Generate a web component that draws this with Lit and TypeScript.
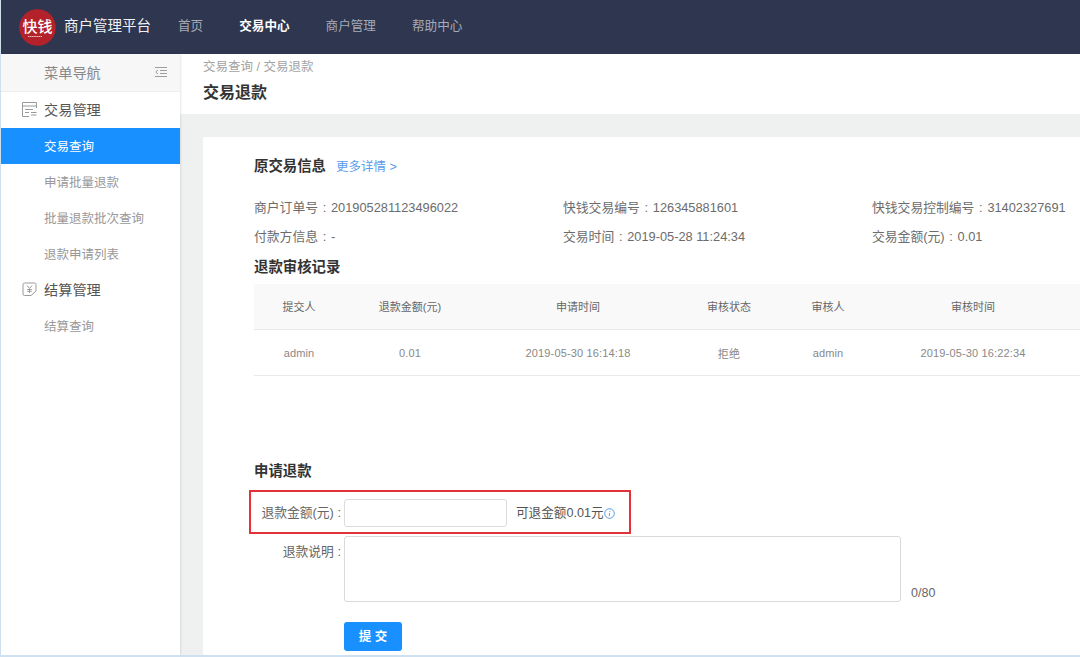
import { LitElement, html, css, svg } from "lit";
import { customElement } from "lit/decorators.js";

const colon = html`<span class="c">:</span>`;

const logo = html`<svg class="logo" viewBox="0 0 37 37" width="37" height="37">
  <circle cx="18.500" cy="18.500" r="18.300" fill="#b3222b"></circle>
  <text x="18.500" y="23" text-anchor="middle" font-size="15" font-weight="500" fill="#fff" font-family="'Noto Sans CJK SC',sans-serif" textLength="30" lengthAdjust="spacingAndGlyphs">快钱</text>
  <path d="M9 27.500h14" stroke="#f2c9c9" stroke-width="1" stroke-dasharray="1.500 .6" fill="none"></path>
</svg>`;

const docIcon = svg`<svg class="ico" viewBox="0 0 15 15" width="15" height="15" fill="none" stroke="#9a9a9a" stroke-width="1">
  <path d="M14.500 6V.5H.5v14H7"></path><path d="M.5 4h14M3 7.500h8M3 10.500h4"></path><path d="M9 10.500h5.500M9 13h5.500"></path></svg>`;

const yenIcon = svg`<svg class="ico" viewBox="0 0 15 15" width="15" height="15" fill="none" stroke="#9a9a9a" stroke-width="1">
  <path d="M9 13.500H2.500a1.500 1.500 0 0 1-1.500-1.500V2.500A1.500 1.500 0 0 1 2.500 1h10A1.500 1.500 0 0 1 14 2.500V9l-5 4.500z"></path>
  <path d="M5 3.500l2.500 3 2.500-3M7.500 6.500V11M5.200 7.500h4.600M5.200 9.300h4.600"></path></svg>`;

const foldIcon = svg`<svg viewBox="0 0 12 10" width="12" height="10" fill="none" stroke="#9d9d9d" stroke-width="1">
  <path d="M0 .5h12M5 3.500h7M5 6.500h7M0 9.500h12M3 3L.8 5 3 7"></path></svg>`;

const infoIcon = svg`<svg class="info" viewBox="0 0 11 11" width="11" height="11">
  <circle cx="5.500" cy="5.500" r="4.800" fill="none" stroke="#5b9bdc" stroke-width="1"></circle>
  <path d="M5.900 3.200v.9M5.700 4.900L5.200 8" stroke="#5b9bdc" stroke-width="1" fill="none"></path></svg>`;

@customElement("app-root")
export class AppRoot extends LitElement {
  static styles = css`
    :host {
      display: block;
      width: 1080px;
      height: 657px;
      overflow: hidden;
      font-family: "Liberation Sans", "Noto Sans CJK SC", sans-serif;
      background: #fff;
    }
    * { box-sizing: border-box; }
    .frame {
      width: 1080px; height: 657px;
      display: flex; flex-direction: column;
      border-left: 1px solid #cfdfee;
      border-bottom: 2px solid #cfe0f1;
      overflow: hidden;
    }
    .top {
      flex: none; height: 54px; background: #2e3650;
      display: flex; align-items: center; padding-left: 18px;
    }
    .logo { flex: none; }
    .brand { color: #eef0f4; font-size: 14.5px; margin-left: 8px; width: 114px; white-space: nowrap; padding-bottom: 5px; }
    .nav { display: flex; gap: 36px; padding-bottom: 6px; }
    .nav span { font-size: 12.6px; color: #a6abb8; white-space: nowrap; }
    .nav span.on { color: #fff; font-weight: 700; }
    .body { flex: 1; min-height: 0; display: flex; }
    .side {
      flex: none; width: 179px; background: #fff;
      box-shadow: 1px 0 2px rgba(0,0,0,.1);
      position: relative;
    }
    .side-head {
      height: 38px; background: #f7f7f7; border-bottom: 1px solid #eee;
      display: flex; align-items: center; justify-content: space-between;
      padding: 0 13px 2px 43px;
      font-size: 14.2px; color: #888;
    }
    .group {
      height: 36px; display: flex; align-items: center;
      padding: 0 0 2px 21px; gap: 7px;
      font-size: 14.2px; color: #555;
    }
    .ico { flex: none; }
    .item {
      height: 36px; display: flex; align-items: center; padding: 0 0 2px 43px;
      font-size: 12.5px; color: #999; white-space: nowrap;
    }
    .item.on { background: #1890ff; color: #fff; }
    .main { flex: 1; min-width: 0; background: #eff1f1; display: flex; flex-direction: column; }
    .crumb { flex: none; height: 60px; background: #fff; padding: 5px 0 0 23px; }
    .crumb .path { font-size: 12.5px; line-height: 16px; color: #a3a3a3; }
    .crumb .title { font-size: 16px; line-height: 24px; margin-top: 6px; font-weight: 700; color: #333; }
    .card {
      flex: 1; background: #fff; margin: 23px 0 0 23px;
      padding: 19px 0 0 51px; overflow: hidden;
    }
    .h { font-size: 14.4px; line-height: 20px; font-weight: 700; color: #333; white-space: nowrap; }
    .h a { font-size: 12.5px; font-weight: 400; color: #5b9bec; margin-left: 6px; }
    .c { display: inline-block; width: 13px; text-align: center; }
    .info-grid {
      display: grid; grid-template-columns: 309px 309px 309px;
      grid-auto-rows: 29px; align-items: center;
      margin-top: 17px; font-size: 12.8px; color: #6c6c6c; white-space: nowrap;
    }
    .info-grid > div { padding-bottom: 4px; }
    .h.rec { margin-top: 5px; }
    .table { margin-top: 7px; width: 900px; font-size: 11px; letter-spacing: .15px; color: #888; }
    .tr {
      display: grid; grid-template-columns: 90px 132px 204px 98px 100px 190px 86px;
      height: 46px; align-items: center; text-align: center;
      border-bottom: 1px solid #e9e9e9; white-space: nowrap;
    }
    .tr.head { background: #f9f9f9; color: #666; padding-bottom: 2px; letter-spacing: 0; }
    .req { margin-top: 85px; }
    .row { display: flex; align-items: center; margin-top: 18px; position: relative; width: 700px; }
    .lab { flex: none; width: 87px; margin-right: 3px; text-align: right; font-size: 12.8px; color: #666; white-space: nowrap; }
    .row > .lab, .avail { padding-bottom: 3px; }
    .input { flex: none; width: 163px; height: 28px; border: 1px solid #dcdcdc; border-radius: 3px; background: #fff; }
    .avail { margin-left: 9px; font-size: 12.6px; color: #555; white-space: nowrap; }
    .info { vertical-align: -2px; margin-left: 1px; }
    .mark {
      position: absolute; left: -5px; top: -9px; width: 382px; height: 44px;
      border: 2.5px solid #e5323a; pointer-events: none;
    }
    .row2 { display: flex; margin-top: 9px; align-items: flex-end; }
    .row2 .lab { align-self: flex-start; padding-top: 5px; }
    .area { flex: none; width: 557px; height: 66px; border: 1px solid #d9d9d9; border-radius: 3px; }
    .count { margin: 0 0 1px 10px; font-size: 12.5px; line-height: 16px; color: #666; }
    .btn {
      display: flex; align-items: center; justify-content: center;
      margin: 20px 0 0 90px; width: 58px; height: 29px; padding-bottom: 2px;
      background: #1890ff; color: #fff; border-radius: 3px;
      font-size: 12.5px; font-weight: 700;
    }
  `;

  render() {
    const subs1 = ["申请批量退款", "批量退款批次查询", "退款申请列表"];
    return html`<div class="frame">
      <header class="top">
        ${logo}
        <div class="brand">商户管理平台</div>
        <nav class="nav"><span>首页</span><span class="on">交易中心</span><span>商户管理</span><span>帮助中心</span></nav>
      </header>
      <div class="body">
        <aside class="side">
          <div class="side-head"><span>菜单导航</span>${foldIcon}</div>
          <div class="group">${docIcon}<span>交易管理</span></div>
          <div class="item on">交易查询</div>
          ${subs1.map((s) => html`<div class="item">${s}</div>`)}
          <div class="group">${yenIcon}<span>结算管理</span></div>
          <div class="item">结算查询</div>
        </aside>
        <main class="main">
          <div class="crumb">
            <div class="path">交易查询 / 交易退款</div>
            <div class="title">交易退款</div>
          </div>
          <section class="card">
            <div class="h">原交易信息 <a>更多详情 &gt;</a></div>
            <div class="info-grid">
              <div>商户订单号${colon}201905281123496022</div>
              <div>快钱交易编号${colon}126345881601</div>
              <div>快钱交易控制编号${colon}31402327691</div>
              <div>付款方信息${colon}-</div>
              <div>交易时间${colon}2019-05-28 11:24:34</div>
              <div>交易金额(元)${colon}0.01</div>
            </div>
            <div class="h rec">退款审核记录</div>
            <div class="table">
              <div class="tr head">
                <span>提交人</span><span>退款金额(元)</span><span>申请时间</span><span>审核状态</span><span>审核人</span><span>审核时间</span><span></span>
              </div>
              <div class="tr">
                <span>admin</span><span>0.01</span><span>2019-05-30 16:14:18</span><span>拒绝</span><span>admin</span><span>2019-05-30 16:22:34</span><span></span>
              </div>
            </div>
            <div class="h req">申请退款</div>
            <div class="row">
              <div class="lab">退款金额(元) :</div>
              <div class="input"></div>
              <div class="avail">可退金额0.01元${infoIcon}</div>
              <div class="mark"></div>
            </div>
            <div class="row2">
              <div class="lab">退款说明 :</div>
              <div class="area"></div>
              <div class="count">0/80</div>
            </div>
            <div class="btn">提 交</div>
          </section>
        </main>
      </div>
    </div>`;
  }
}
